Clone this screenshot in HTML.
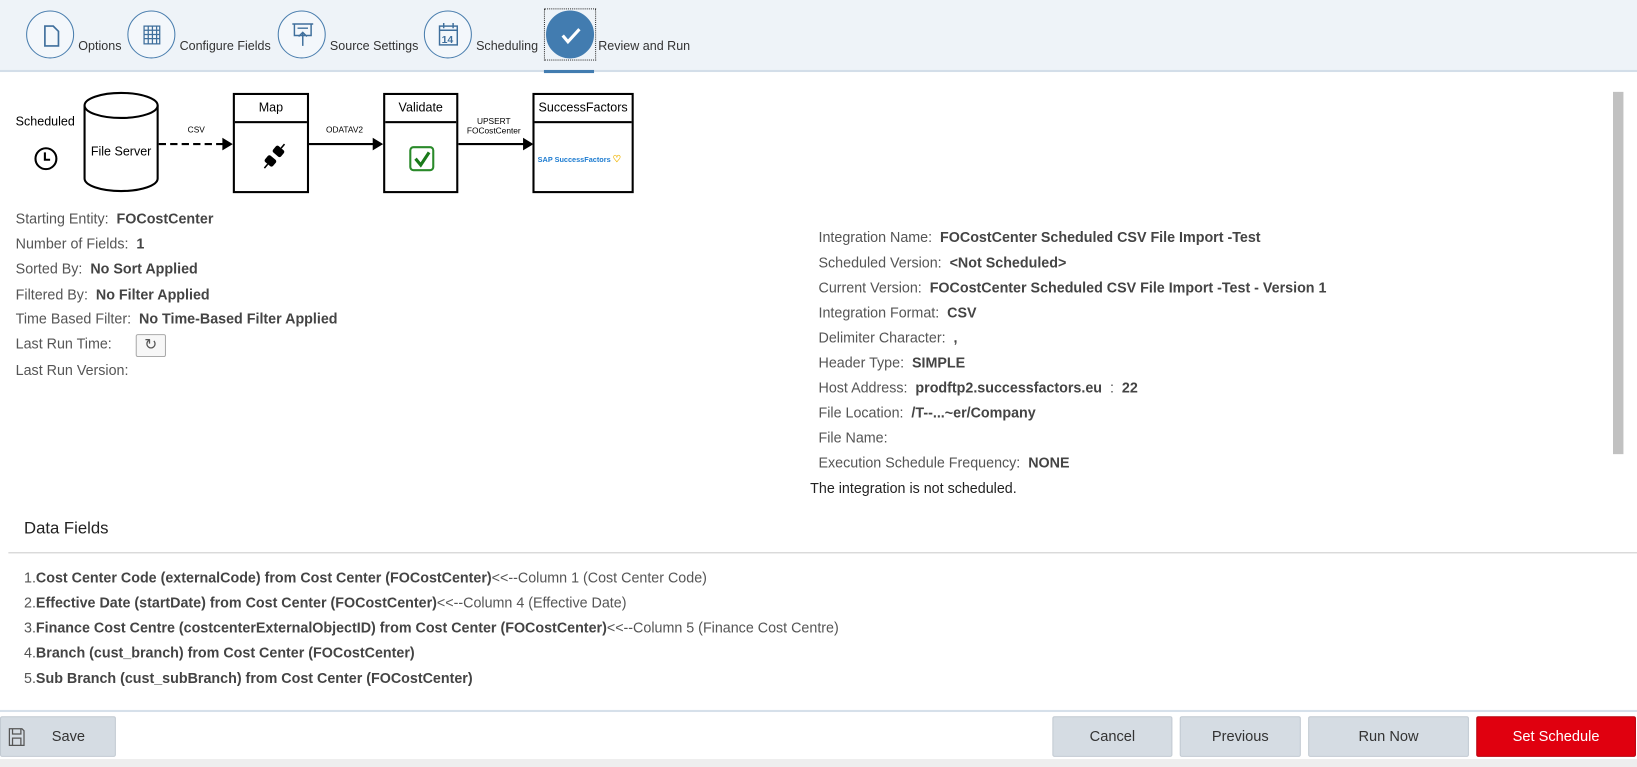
<!DOCTYPE html>
<html><head><meta charset="utf-8"><style>
*{margin:0;padding:0;box-sizing:border-box}
html,body{width:1637px;height:764px;overflow:hidden;background:#fff}
#w{position:absolute;left:0;top:0;width:1568px;height:732px;transform:scale(1.04401);transform-origin:0 0;font-family:"Liberation Sans",Arial,sans-serif;font-size:13.7px;color:#555}
.a{position:absolute;white-space:nowrap}
.hdr{position:absolute;left:0;top:0;width:1568px;height:69px;background:#eef3f8;border-bottom:2px solid #d3dee9}
.c{position:absolute;width:46px;height:46px;border:1px solid #4a7eae;border-radius:50%;background:#f3f7fb;top:10px}
.sl{position:absolute;top:37px;font-size:12px;color:#333}
b{color:#444}
.box{position:absolute;border:2px solid #000;background:#fff;top:89px;height:96px}
.box .t{height:27px;border-bottom:2px solid #000;text-align:center;line-height:25px;color:#000;font-size:12px}
.btn{position:absolute;top:686px;height:39px;background:#d5dce3;border:1px solid #c2cad2;border-radius:2px;text-align:center;line-height:37px;color:#333;font-size:14px}
</style></head><body><div id="w">
<div class="hdr">
 <div class="c" style="left:25px"><svg width="46" height="46" viewBox="0 0 46 46"><path d="M17 14h8l5 5v14H17z" fill="none" stroke="#3f6f9c" stroke-width="1.6"/></svg></div>
 <div class="sl" style="left:75px">Options</div>
 <div class="c" style="left:122px"><svg width="46" height="46" viewBox="0 0 46 46"><g fill="none" stroke="#3f6f9c" stroke-width="1.2"><rect x="15" y="14" width="15" height="17"/><path d="M15 18h15M15 22h15M15 26h15M19 14v17M23 14v17M27 14v17"/></g></svg></div>
 <div class="sl" style="left:172px">Configure Fields</div>
 <div class="c" style="left:266px"><svg width="46" height="46" viewBox="0 0 46 46"><g fill="none" stroke="#3f6f9c" stroke-width="1.4"><path d="M13 12h20M15 12v11h16V12M23 33V20M19 24l4-4 4 4M18 16h10"/></g></svg></div>
 <div class="sl" style="left:316px">Source Settings</div>
 <div class="c" style="left:406px"><svg width="46" height="46" viewBox="0 0 46 46"><g fill="none" stroke="#3f6f9c" stroke-width="1.4"><rect x="14" y="14" width="17" height="18"/><path d="M14 18h17M18 11v5M27 11v5"/></g><text x="16" y="30" font-size="10" font-weight="bold" fill="#3f6f9c" font-family="Liberation Sans">14</text></svg></div>
 <div class="sl" style="left:456px">Scheduling</div>
 <div style="position:absolute;left:521px;top:8px;width:50px;height:50px;border:1px dotted #333"></div>
 <div class="c" style="left:523px;top:10px;background:#427cb0;border-color:#427cb0"><svg width="46" height="46" viewBox="0 0 46 46"><path d="M15 23l5 6 11-12" fill="none" stroke="#fff" stroke-width="3"/></svg></div>
 <div class="sl" style="left:573px">Review and Run</div>
 <div style="position:absolute;left:521px;top:67px;width:48px;height:3px;background:#427cb0"></div>
</div>

<div class="a" style="left:15px;top:109px;font-size:12px;color:#000">Scheduled</div>
<svg class="a" style="left:31px;top:139px" width="26" height="26"><circle cx="13" cy="13" r="10" fill="none" stroke="#000" stroke-width="2"/><path d="M12 7v7h5" fill="none" stroke="#000" stroke-width="2"/></svg>
<svg class="a" style="left:78px;top:87px" width="540" height="100">
 <path d="M3 14v70a35 12 0 0 0 70 0V14" fill="#fff" stroke="#000" stroke-width="2"/>
 <ellipse cx="38" cy="14" rx="35" ry="12" fill="#fff" stroke="#000" stroke-width="2"/>
 <text x="38" y="62" font-size="12" text-anchor="middle" font-family="Liberation Sans">File Server</text>
 <path d="M74 51h65" stroke="#000" stroke-width="2" stroke-dasharray="7,4"/><path d="M135 45l10 6-10 6z"/>
 <text x="110" y="40" font-size="8" text-anchor="middle" font-family="Liberation Sans">CSV</text>
 <path d="M217 51h63" stroke="#000" stroke-width="2"/><path d="M279 45l10 6-10 6z"/>
 <text x="252" y="40" font-size="8" text-anchor="middle" font-family="Liberation Sans">ODATAV2</text>
 <path d="M361 51h63" stroke="#000" stroke-width="2"/><path d="M423 45l10 6-10 6z"/>
 <text x="395" y="32" font-size="8" text-anchor="middle" font-family="Liberation Sans">UPSERT</text>
 <text x="395" y="41" font-size="8" text-anchor="middle" font-family="Liberation Sans">FOCostCenter</text>
</svg>
<div class="box" style="left:223px;width:73px"><div class="t">Map</div><svg width="70" height="66"><g transform="rotate(40 38 33)"><rect x="32" y="22" width="10" height="8" rx="2"/><rect x="32" y="34" width="10" height="8" rx="2"/><path d="M37 17v5M37 42v5" stroke="#000" stroke-width="1.5"/></g></svg></div>
<div class="box" style="left:367px;width:72px"><div class="t">Validate</div><svg width="70" height="66"><rect x="24" y="23" width="22" height="22" rx="3" fill="#fff" stroke="#2a8a2a" stroke-width="2"/><path d="M29 34l5 6 8-12" fill="none" stroke="#1a7a1a" stroke-width="3"/></svg></div>
<div class="box" style="left:510px;width:97px"><div class="t">SuccessFactors</div><div style="position:absolute;left:3px;top:56px;font-size:7px;font-weight:bold;color:#1c7bd0">SAP SuccessFactors <span style="color:#f0b400;font-size:9px">♡</span></div></div>

<div class="a" style="left:15px;top:202px">Starting Entity:&nbsp; <b>FOCostCenter</b></div>
<div class="a" style="left:15px;top:226px">Number of Fields:&nbsp; <b>1</b></div>
<div class="a" style="left:15px;top:250px">Sorted By:&nbsp; <b>No Sort Applied</b></div>
<div class="a" style="left:15px;top:275px">Filtered By:&nbsp; <b>No Filter Applied</b></div>
<div class="a" style="left:15px;top:298px">Time Based Filter:&nbsp; <b>No Time-Based Filter Applied</b></div>
<div class="a" style="left:15px;top:322px">Last Run Time:</div>
<div class="a" style="left:130px;top:320px;width:29px;height:22px;border:1px solid #aaa;border-radius:2px;background:#f7f7f7;text-align:center;line-height:20px;font-size:15px;color:#555">↻</div>
<div class="a" style="left:15px;top:347px">Last Run Version:</div>

<div class="a" style="left:784px;top:220px">Integration Name:&nbsp; <b>FOCostCenter Scheduled CSV File Import -Test</b></div>
<div class="a" style="left:784px;top:244px">Scheduled Version:&nbsp; <b>&lt;Not Scheduled&gt;</b></div>
<div class="a" style="left:784px;top:268px">Current Version:&nbsp; <b>FOCostCenter Scheduled CSV File Import -Test - Version 1</b></div>
<div class="a" style="left:784px;top:292px">Integration Format:&nbsp; <b>CSV</b></div>
<div class="a" style="left:784px;top:316px">Delimiter Character:&nbsp; <b>,</b></div>
<div class="a" style="left:784px;top:340px">Header Type:&nbsp; <b>SIMPLE</b></div>
<div class="a" style="left:784px;top:364px">Host Address:&nbsp; <b>prodftp2.successfactors.eu</b>&nbsp; : &nbsp;<b>22</b></div>
<div class="a" style="left:784px;top:388px">File Location:&nbsp; <b>/T--...~er/Company</b></div>
<div class="a" style="left:784px;top:412px">File Name:</div>
<div class="a" style="left:784px;top:436px">Execution Schedule Frequency:&nbsp; <b>NONE</b></div>
<div class="a" style="left:776px;top:460px;color:#222">The integration is not scheduled.</div>
<div class="a" style="left:1545px;top:88px;width:10px;height:347px;background:#c1c1c1"></div>

<div class="a" style="left:23px;top:498px;font-size:16px;color:#222">Data Fields</div>
<div class="a" style="left:8px;top:529px;width:1560px;height:1px;background:#ccc"></div>
<div class="a" style="left:23px;top:546px">1.<b>Cost Center Code (externalCode) from Cost Center (FOCostCenter)</b>&lt;&lt;--Column 1 (Cost Center Code)</div>
<div class="a" style="left:23px;top:570px">2.<b>Effective Date (startDate) from Cost Center (FOCostCenter)</b>&lt;&lt;--Column 4 (Effective Date)</div>
<div class="a" style="left:23px;top:594px">3.<b>Finance Cost Centre (costcenterExternalObjectID) from Cost Center (FOCostCenter)</b>&lt;&lt;--Column 5 (Finance Cost Centre)</div>
<div class="a" style="left:23px;top:618px">4.<b>Branch (cust_branch) from Cost Center (FOCostCenter)</b></div>
<div class="a" style="left:23px;top:642px">5.<b>Sub Branch (cust_subBranch) from Cost Center (FOCostCenter)</b></div>

<div class="a" style="left:0;top:680px;width:1568px;height:2px;background:#d6e0ea"></div>
<div class="btn" style="left:0;width:111px"><svg style="position:absolute;left:7px;top:10px" width="16" height="18"><path d="M1 1h12l2 2v14H1z M4 1v5h8V1 M4 10h8v7H4z" fill="none" stroke="#555" stroke-width="1.2"/></svg><span style="margin-left:20px">Save</span></div>
<div class="btn" style="left:1008px;width:115px">Cancel</div>
<div class="btn" style="left:1130px;width:116px">Previous</div>
<div class="btn" style="left:1253px;width:154px">Run Now</div>
<div class="btn" style="left:1414px;width:153px;background:#e0000f;border-color:#b8000c;color:#fff">Set Schedule</div>
<div class="a" style="left:0;top:727px;width:1568px;height:8px;background:#eeeeee"></div>
</div></body></html>
